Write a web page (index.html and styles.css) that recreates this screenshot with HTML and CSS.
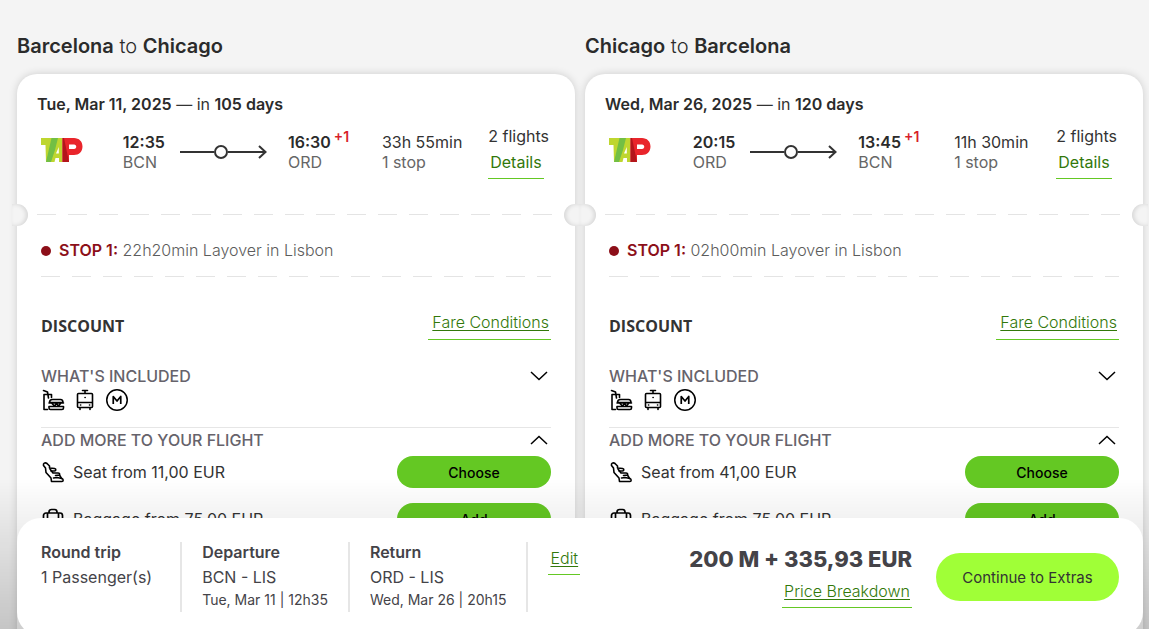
FILE: index.html
```html
<!DOCTYPE html>
<html lang="en">
  <head>
    <meta charset="utf-8" />
    <meta name="viewport" content="width=device-width, initial-scale=1" />
    <title>Barcelona to Chicago</title>
    <link rel="stylesheet" href="styles.css" />
  </head>
  <body>
    <!-- shared icons -->
    <svg class="sprite" aria-hidden="true">
      <symbol id="tap" viewBox="0 0 42 25">
        <path d="M0 0h14l-3.500 7L9.500 24H5L4.500 7H0z" fill="#bed62f" />
        <path d="M16 0h5.500v24h-3.500v-4h-3.500L13.500 24H9z" fill="#bed62f" />
        <path d="M10.500 0H17l-3 12-4 12H5z" fill="#72bf44" />
        <path d="M15 15.500h2.800V9z" fill="#fff" />
        <path d="M21.500 0H33c5 0 8.500 3.500 8.500 8.500S38 17 33 17h-5v7h-6.500z M28 6.500v4.500h5c3 0 3-4.500 0-4.500z" fill="#e9252b" fill-rule="evenodd" />
        <path d="M21.500 0h1.500L28 24h-6.500z" fill="#b3151b" />
      </symbol>
      <symbol id="route" viewBox="0 0 87 16">
        <path d="M0 8h34M48 8h37M79 2l6.500 6-6.500 6" fill="none" stroke="#333" stroke-width="2" />
        <circle cx="41" cy="8" r="6" fill="none" stroke="#333" stroke-width="2" />
      </symbol>
      <symbol id="meal" viewBox="0 0 24 24">
        <g fill="none" stroke="#000" stroke-width="1.600" stroke-linecap="round" stroke-linejoin="round">
          <path d="M2.500 2.500l4 1.500 1 6M3 6.500h7.500v3M3 6.500v15h3.500" />
          <path d="M8.500 14.500c0-2.500 1-3 3-3h8c2 0 2.500 1 2.500 3zM8 15h14.500M11 15.500l2.500 2.500 2-2.500 2 2.500 2-2.500M8 18.500h14.500v1.500c0 1-.5 1.500-1.500 1.500H9.500c-1 0-1.500-.5-1.500-1.500z" />
        </g>
      </symbol>
      <symbol id="cabin" viewBox="0 0 24 24">
        <g fill="none" stroke="#000" stroke-width="1.600" stroke-linecap="round" stroke-linejoin="round">
          <path d="M9.500 2.500h5M12 2.500v3M5.500 5.500h13c.5 0 1 .5 1 1v12c0 .5-.5 1-1 1h-13c-.5 0-1-.5-1-1v-12c0-.5.5-1 1-1zM4.500 14.500h15M7 19.500V21.500M17 19.500V21.500" />
          <path d="M7.500 17h.2M16.500 17h.2M12 9.500h.2" />
        </g>
      </symbol>
      <symbol id="miles" viewBox="0 0 24 24">
        <g fill="none" stroke="#000" stroke-width="1.500" stroke-linejoin="round">
          <circle cx="12" cy="12" r="10.250" />
          <path d="M8.250 16V8.500l3.750 4.500 3.750-4.500V16" stroke-width="1.700" />
        </g>
      </symbol>
      <symbol id="seat" viewBox="0 0 24 24">
        <g fill="none" stroke="#000" stroke-width="1.600" stroke-linecap="round" stroke-linejoin="round">
          <path d="M10.500 21.500h10.500c1.500 0 1.500-2.500 0-3l-5-1-3.500.5M10.500 21.500L10 18 5 12.500 4.500 8 2.500 5.500C2 3.500 4 2 6 3.500L8.500 6v2l5 .5c2 .5 1.500 2.500 0 2.500H10" />
          <path d="M9 9l3 4h5c1.500 0 2 1 1.500 2l-4 .5M18.500 15l2 3.500" />
        </g>
      </symbol>
      <symbol id="bag" viewBox="0 0 24 24">
        <g fill="none" stroke="#000" stroke-width="1.700" stroke-linejoin="round">
          <rect x="2.500" y="6" width="19" height="14.500" rx="2.500" />
          <path d="M8 6V5c0-1.500 1-2.500 2.500-2.500h3C15 2.500 16 3.500 16 5v1M6.500 6v14M17.500 6v14" />
        </g>
      </symbol>
      <symbol id="down" viewBox="0 0 18 10">
        <path d="M1 1l8 7.500L17 1" fill="none" stroke="#000" stroke-width="1.500" />
      </symbol>
      <symbol id="up" viewBox="0 0 18 10">
        <path d="M1 9l8-7.500L17 9" fill="none" stroke="#000" stroke-width="1.500" />
      </symbol>
    </svg>

    <main class="flights">
      <section>
        <h2 class="route-title"><b>Barcelona</b> to <b>Chicago</b></h2>
        <div class="card">
          <p class="date"><b>Tue, Mar 11, 2025</b> — in <b>105 days</b></p>
          <div class="flight">
            <svg class="logo" role="img" aria-label="TAP"><use href="#tap" /></svg>
            <div class="times">
              <div><b>12:35</b><span class="muted">BCN</span></div>
              <svg class="route"><use href="#route" /></svg>
              <div><b>16:30<sup>+1</sup></b><span class="muted">ORD</span></div>
            </div>
            <div class="duration"><span>33h 55min</span><span class="muted">1 stop</span></div>
            <div class="legs"><span>2 flights</span><a class="details" href="#">Details</a></div>
          </div>
          <div class="tear"></div>
          <p class="stop"><b>STOP 1:</b> 22h20min Layover in Lisbon</p>
          <div class="dashes"></div>
          <div class="fare">
            <h3>DISCOUNT</h3>
            <a class="link" href="#">Fare Conditions</a>
          </div>
          <div class="included">
            <button class="toggle" type="button">WHAT'S INCLUDED <svg><use href="#down" /></svg></button>
            <div class="icons">
              <svg class="icon"><use href="#meal" /></svg>
              <svg class="icon"><use href="#cabin" /></svg>
              <svg class="icon"><use href="#miles" /></svg>
            </div>
          </div>
          <div class="extras">
            <button class="toggle" type="button">ADD MORE TO YOUR FLIGHT <svg><use href="#up" /></svg></button>
            <div class="extra">
              <svg class="icon"><use href="#seat" /></svg>
              <span>Seat from 11,00 EUR</span>
              <button class="choose" type="button">Choose</button>
            </div>
            <div class="extra">
              <svg class="icon"><use href="#bag" /></svg>
              <span>Baggage from 75,00 EUR</span>
              <button class="choose" type="button">Add</button>
            </div>
          </div>
        </div>
      </section>

      <section>
        <h2 class="route-title"><b>Chicago</b> to <b>Barcelona</b></h2>
        <div class="card">
          <p class="date"><b>Wed, Mar 26, 2025</b> — in <b>120 days</b></p>
          <div class="flight">
            <svg class="logo" role="img" aria-label="TAP"><use href="#tap" /></svg>
            <div class="times">
              <div><b>20:15</b><span class="muted">ORD</span></div>
              <svg class="route"><use href="#route" /></svg>
              <div><b>13:45<sup>+1</sup></b><span class="muted">BCN</span></div>
            </div>
            <div class="duration"><span>11h 30min</span><span class="muted">1 stop</span></div>
            <div class="legs"><span>2 flights</span><a class="details" href="#">Details</a></div>
          </div>
          <div class="tear"></div>
          <p class="stop"><b>STOP 1:</b> 02h00min Layover in Lisbon</p>
          <div class="dashes"></div>
          <div class="fare">
            <h3>DISCOUNT</h3>
            <a class="link" href="#">Fare Conditions</a>
          </div>
          <div class="included">
            <button class="toggle" type="button">WHAT'S INCLUDED <svg><use href="#down" /></svg></button>
            <div class="icons">
              <svg class="icon"><use href="#meal" /></svg>
              <svg class="icon"><use href="#cabin" /></svg>
              <svg class="icon"><use href="#miles" /></svg>
            </div>
          </div>
          <div class="extras">
            <button class="toggle" type="button">ADD MORE TO YOUR FLIGHT <svg><use href="#up" /></svg></button>
            <div class="extra">
              <svg class="icon"><use href="#seat" /></svg>
              <span>Seat from 41,00 EUR</span>
              <button class="choose" type="button">Choose</button>
            </div>
            <div class="extra">
              <svg class="icon"><use href="#bag" /></svg>
              <span>Baggage from 75,00 EUR</span>
              <button class="choose" type="button">Add</button>
            </div>
          </div>
        </div>
      </section>
    </main>

    <!-- sticky booking summary -->
    <footer class="summary">
      <div class="panel">
        <div class="trip"><b>Round trip</b><span>1 Passenger(s)</span></div>
        <div class="trip"><b>Departure</b><span>BCN - LIS</span><small>Tue, Mar 11 | 12h35</small></div>
        <div class="trip"><b>Return</b><span>ORD - LIS</span><small>Wed, Mar 26 | 20h15</small></div>
        <a class="link edit" href="#">Edit</a>
        <div class="price">
          <strong>200 M + 335,93 EUR</strong>
          <a class="link" href="#">Price Breakdown</a>
        </div>
        <button class="continue" type="button">Continue to Extras</button>
      </div>
    </footer>
  </body>
</html>
```
FILE: styles.css
```css
* {
  box-sizing: border-box;
}

body {
  margin: 0;
  height: 100vh;
  overflow: hidden;
  background-color: #f4f4f4;
  color: #333;
  font-family: Inter, 'Liberation Sans', sans-serif;
  font-size: 16px;
  font-weight: 400;
  line-height: 20px;
}

h2,
h3,
p {
  margin: 0;
}

button {
  border: 0;
  padding: 0;
  font-family: inherit;
  cursor: pointer;
}

.sprite {
  display: none;
}

.flights {
  display: grid;
  grid-template-columns: 1fr 1fr;
  gap: 10px;
  padding: 34px 6px 0 17px;
}

.route-title {
  margin-bottom: 16px;
  font-size: 20px;
  font-weight: 300;
  line-height: 24px;
  color: #2b2b2b;
}

.route-title b {
  font-weight: 600;
}

.card {
  padding: 18px 24px 110px;
  border-radius: 20px;
  background-color: white;
  box-shadow: 0 0 8px rgba(0, 0, 0, 0.16);
}

.date {
  margin: 0 -4px 10px;
  line-height: 24px;
}

.date b,
.times b {
  font-weight: 600;
  color: #2b2b2b;
}

.flight {
  display: flex;
  justify-content: space-between;
  padding-right: 2px;
}

.flight span,
.flight b {
  display: block;
}

.flight .muted {
  color: #666;
}

.logo {
  width: 42px;
  height: 25px;
  margin: 12px 14px 0 0;
}

.times {
  display: flex;
  margin-right: 7px;
  padding-top: 6px;
}

.route {
  width: 87px;
  height: 16px;
  margin: 12px 21px 0 15px;
}

sup {
  margin-left: 3px;
  font-size: 14px;
  line-height: 0;
  color: #d81f2a;
}

.duration {
  padding-top: 6px;
}

.details {
  display: inline-block;
  margin-top: 6px;
  padding: 0 2px 6px;
  border-bottom: 1px solid #64c823;
  color: #32780a;
  text-decoration: none;
}

/* dashed tear line with a half circle cut from each side of the card */
.tear,
.dashes {
  height: 1px;
  background: repeating-linear-gradient(to right, #e4e4e4 0 19px, transparent 19px 31px);
}

.tear {
  position: relative;
  margin: 35px -4px 25px;
}

.tear::before,
.tear::after {
  content: '';
  position: absolute;
  top: -10px;
  left: -25px;
  width: 16px;
  height: 22px;
  border-radius: 0 11px 11px 0;
  background-color: #f4f4f4;
  box-shadow: inset -2px 0 4px rgba(0, 0, 0, 0.12);
}

.tear::after {
  left: auto;
  right: -25px;
  border-radius: 11px 0 0 11px;
  box-shadow: inset 2px 0 4px rgba(0, 0, 0, 0.12);
}

.stop {
  margin-bottom: 16px;
  color: #5c5c5c;
  font-weight: 300;
}

.stop b {
  font-weight: 600;
  color: #8c0f19;
}

.stop::before {
  content: '';
  display: inline-block;
  width: 10px;
  height: 10px;
  margin-right: 8px;
  border-radius: 50%;
  background-color: #8c0f19;
}

.fare {
  display: flex;
  justify-content: space-between;
  align-items: center;
  margin-top: 35px;
}

.fare h3 {
  font-family: 'Open Sans', sans-serif;
  font-size: 16px;
  font-weight: 700;
}

.link {
  padding: 0 2px 7px;
  border-bottom: 1px solid #64c823;
  color: #32780a;
  font-weight: 300;
  text-decoration: underline;
  text-underline-offset: 2px;
}

.fare .link {
  padding-left: 4px;
}

.included {
  margin-top: 26px;
  padding-bottom: 15px;
  border-bottom: 1px solid #e6e6e6;
}

.toggle {
  display: flex;
  justify-content: space-between;
  align-items: center;
  width: 100%;
  background: none;
  color: #66636b;
  font-size: 16px;
  font-weight: 500;
  line-height: 20px;
}

.toggle svg {
  width: 18px;
  height: 10px;
  margin-right: 3px;
}

.icons {
  display: flex;
  gap: 8px;
  margin-top: 2px;
}

.icon {
  width: 24px;
  height: 24px;
}

.extras {
  padding-top: 2px;
}

.extra {
  display: flex;
  align-items: center;
  gap: 8px;
  margin: 6px 0 15px;
}

.extra + .extra {
  margin-top: 0;
}

.choose {
  width: 154px;
  height: 32px;
  margin-left: auto;
  border-radius: 16px;
  background-color: #64c823;
  color: black;
  font-size: 14px;
  font-weight: 500;
}

.summary {
  position: fixed;
  right: 0;
  bottom: -7px;
  left: 0;
  padding: 40px 6px 0 17px;
  background: linear-gradient(to bottom, transparent, rgba(0, 0, 0, 0.2));
}

.panel {
  display: flex;
  padding: 24px;
  border-radius: 24px;
  background-color: white;
  color: #444348;
}

.trip {
  display: flex;
  flex-direction: column;
  height: 70px;
  margin-right: 20px;
  padding-right: 20px;
  border-right: 2px solid #e6e6e6;
}

.trip:first-child {
  padding-right: 28px;
}

.trip b {
  margin-bottom: 5px;
  font-weight: 600;
}

.trip small {
  margin-top: 3px;
  font-size: 14px;
}

.edit {
  align-self: flex-start;
  margin-top: 6px;
  padding-bottom: 6px;
}

.price {
  display: flex;
  flex-direction: column;
  align-items: flex-end;
  margin-left: auto;
}

.price strong {
  margin: 5px 0 10px;
  font-size: 22px;
  font-weight: 800;
  line-height: 24px;
}

.price .link {
  padding-bottom: 6px;
}

.continue {
  width: 183px;
  height: 48px;
  margin: 11px 0 0 24px;
  border-radius: 24px;
  background-color: #a0ff37;
  color: #333;
  font-size: 15px;
}
```
